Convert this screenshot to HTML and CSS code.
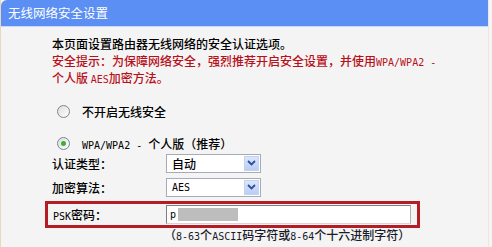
FILE: index.html
```html
<!DOCTYPE html>
<html lang="zh">
<head>
<meta charset="utf-8">
<link rel="stylesheet" href="styles.css">
</head>
<body>
<div class="panel">
  <div class="header">无线网络安全设置</div>
  <div class="content">
    <div class="intro">
      <p class="line">本页面设置路由器无线网络的安全认证选项。</p>
      <p class="line warn">安全提示：为保障网络安全，强烈推荐开启安全设置，并使用<span class="latin">WPA/WPA2 -</span></p>
      <p class="line warn">个人版 <span class="latin">AES</span>加密方法。</p>
    </div>
    <div class="radio-row first">
      <span class="radio"></span>
      <span class="rlabel">不开启无线安全</span>
    </div>
    <div class="radio-row second">
      <span class="radio checked"><span class="dot"></span></span>
      <span class="rlabel"><span class="latin">WPA/WPA2 - </span>个人版（推荐）</span>
    </div>
    <div class="field">
      <span class="flabel">认证类型：</span>
      <div class="select"><span class="sval">自动</span><span class="sbtn"><svg width="9" height="6" viewBox="0 0 9 6"><path d="M1 1 L4.5 4.5 L8 1" fill="none" stroke="#2d4f9e" stroke-width="1.8"/></svg></span></div>
    </div>
    <div class="field">
      <span class="flabel">加密算法：</span>
      <div class="select"><span class="sval latin">AES</span><span class="sbtn"><svg width="9" height="6" viewBox="0 0 9 6"><path d="M1 1 L4.5 4.5 L8 1" fill="none" stroke="#2d4f9e" stroke-width="1.8"/></svg></span></div>
    </div>
    <div class="psk">
      <span class="flabel"><span class="latin">PSK</span>密码：</span>
      <div class="input"><span class="latin">p</span><span class="blur"></span></div>
    </div>
    <div class="hint">（<span class="latin">8-63</span>个<span class="latin">ASCII</span>码字符或<span class="latin">8-64</span>个十六进制字符）</div>
  </div>
</div>
</body>
</html>
```
FILE: styles.css
```css
html, body {
  margin: 0;
  padding: 0;
  background: #f4f4f4;
}
body {
  font-family: "Noto Sans CJK SC", sans-serif;
  font-size: 12px;
  color: #000;
}
.panel {
  width: 489px;
  height: 247px;
  border-right: 1px solid #f0e4e4;
  border-left: 1px solid #e8d8c0;
  background: #f4f4f4;
  box-sizing: border-box;
  overflow: hidden;
}
.header {
  height: 26px;
  background: #5b8ff4;
  color: #fff;
  font-size: 12.5px;
  line-height: 26px;
  padding-left: 7px;
  border-top-left-radius: 6px;
  border-bottom: 1px solid #c9d8f5;
}
.content {
  padding-left: 51px;
}
.intro {
  padding-top: 8px;
}
.line {
  margin: 0;
  line-height: 17px;
  height: 17px;
  white-space: nowrap;
  font-weight: 500;
}
.warn {
  color: #b8101a;
}
.latin {
  font-family: "DejaVu Sans Mono", monospace;
  font-size: 10px;
}
.radio-row {
  display: flex;
  align-items: center;
  height: 18px;
  margin-left: 5px;
  font-weight: 500;
}
.radio-row.first {
  margin-top: 16px;
}
.radio-row.second {
  margin-top: 14px;
}
.radio {
  width: 11px;
  height: 11px;
  border: 1px solid #7a8596;
  border-radius: 50%;
  background: linear-gradient(135deg, #dcdcdc, #ffffff);
  display: flex;
  align-items: center;
  justify-content: center;
  margin-right: 12px;
}
.dot {
  width: 5px;
  height: 5px;
  border-radius: 50%;
  background: #3fae3a;
}
.field {
  display: flex;
  align-items: center;
  height: 20px;
  margin-top: 1px;
  font-weight: 500;
}
.field + .field {
  margin-top: 4px;
}
.flabel {
  width: 114px;
  flex: none;
}
.select {
  width: 95px;
  height: 19px;
  box-sizing: border-box;
  border: 1px solid #a5acb5;
  background: #fff;
  display: flex;
  align-items: center;
  justify-content: space-between;
  padding-left: 5px;
  padding-right: 1px;
}
.sbtn {
  width: 15px;
  height: 15px;
  background: linear-gradient(#dbe6fb, #b9cdf4);
  border: 1px solid #c3d3f1;
  box-sizing: border-box;
  display: flex;
  align-items: center;
  justify-content: center;
}
.psk {
  display: flex;
  align-items: center;
  margin-left: -7px;
  margin-top: 4px;
  width: 375px;
  height: 27px;
  box-sizing: border-box;
  border: 3px solid #b51c24;
  padding-left: 5px;
  font-weight: 500;
}
.psk .flabel {
  width: 113px;
}
.input {
  width: 245px;
  height: 19px;
  box-sizing: border-box;
  border: 1px solid #7f7f7f;
  border-right-color: #b0b0b0;
  border-bottom-color: #d4d4d4;
  background: #fff;
  display: flex;
  align-items: center;
  padding-left: 3px;
}
.blur {
  display: inline-block;
  width: 60px;
  height: 13px;
  margin-left: 2px;
  background: #bdbdbd;
}
.hint {
  margin-left: 112px;
  margin-top: 0;
  line-height: 14px;
  white-space: nowrap;
  font-weight: 500;
  color: #1a1a2a;
}
```
